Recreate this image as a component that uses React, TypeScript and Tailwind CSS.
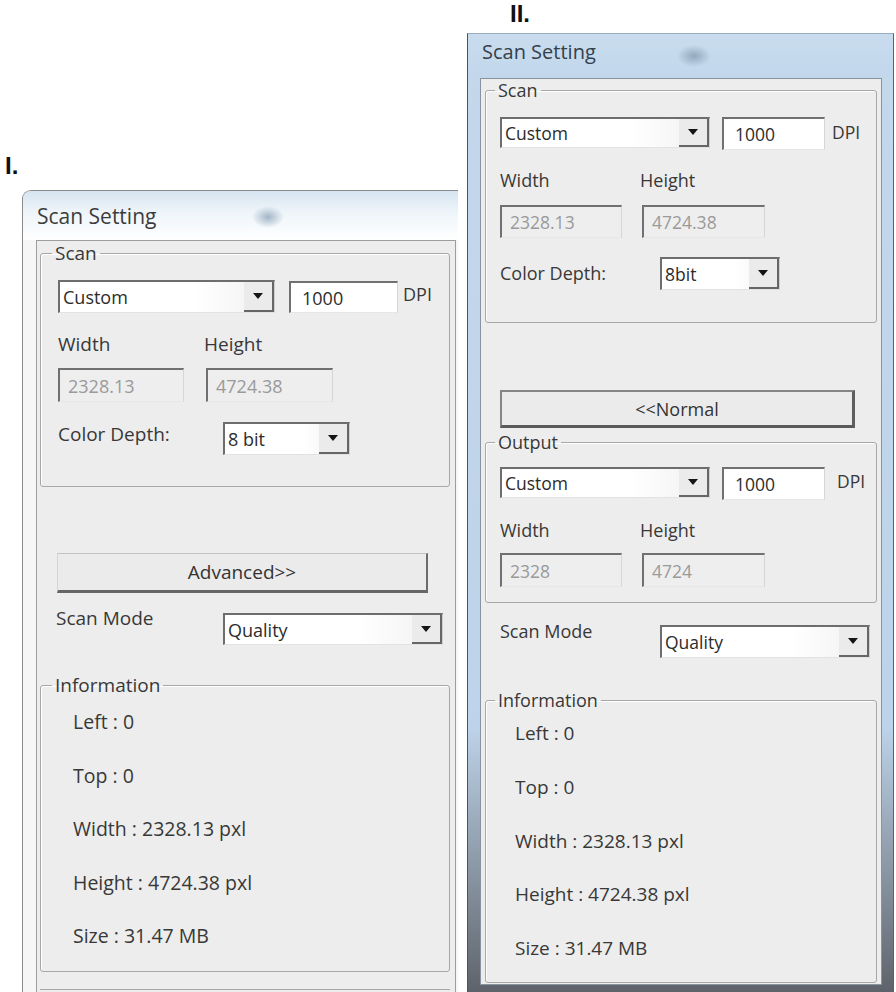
import type { ReactNode } from 'react';

type BoxProps = { value: string; className?: string };

const Arrow = () => (
  <svg width="10" height="6" viewBox="0 0 10 6">
    <path d="M0 0h10L5 6z" fill="#151515" />
  </svg>
);

function Combo({ value, className = '' }: BoxProps) {
  return (
    <div className={`flex shrink-0 border-l-2 border-t-2 border-[#6d6d6d] border-r border-b border-r-[#cfcfcf] border-b-[#e2e2e2] bg-[linear-gradient(to_right,#ffffff_62%,#f0f0f0)] text-[#2c2c2c] ${className}`}>
      <span className="flex flex-1 items-center pl-[3px]">{value}</span>
      <span className="flex w-[30px] items-center justify-center border-r-2 border-b-2 border-[#666666] bg-[#ebebeb]">
        <Arrow />
      </span>
    </div>
  );
}

function TextBox({ value, className = '', disabled = false }: BoxProps & { disabled?: boolean }) {
  return (
    <div
      className={`flex shrink-0 items-center border-l-2 border-t-2 border-[#707070] border-r border-b border-r-[#d6d6d6] border-b-[#e6e6e6] ${
        disabled ? 'bg-[#eeeeee] pl-[8px] text-[#9a9a9a]' : 'bg-white pl-[11px] text-[#2c2c2c]'
      } ${className}`}
    >
      {value}
    </div>
  );
}

function GroupBox({ title, className = '', legend = '', children }: { title: string; className?: string; legend?: string; children: ReactNode }) {
  return (
    <fieldset className={`shrink-0 rounded-[3px] border border-[#a7a7a7] shadow-[inset_1px_1px_0_#ffffff] ${className}`}>
      <legend className={`px-[3px] leading-[20px] ${legend}`}>{title}</legend>
      {children}
    </fieldset>
  );
}

const infoLines = ['Left : 0', 'Top : 0', 'Width : 2328.13 pxl', 'Height : 4724.38 pxl', 'Size : 31.47 MB'];

function LeftWindow() {
  return (
    <div className="mt-[12px] ml-[22px] w-[470px] rounded-tl-[9px] border-l border-t border-[#8b8b8b] bg-[#f6f6f6] pb-[12px]">
      <div className="h-[49px] rounded-tl-[8px] bg-[radial-gradient(16px_11px_at_245px_26px,#a3b6c8,transparent),linear-gradient(to_bottom,#d5e4f0,#edf4f9_40%,#ffffff)] pt-[11px] pl-[14px] text-[21px] leading-[28px] text-[#3c3c3c]">
        Scan Setting
      </div>
      <div className="ml-[13px] flex w-[420px] flex-col items-start border border-[#9d9d9d] bg-[#ededed] text-[19px] leading-[22px] text-[#383838]">
        <GroupBox title="Scan" className="mt-[2px] ml-[3px] w-[410px] pb-[31px]" legend="ml-[11px]">
          <div className="pt-[17px] pl-[17px]">
            <div className="flex items-start text-[18px]">
              <Combo value="Custom" className="h-[33px] w-[217px]" />
              <TextBox value="1000" className="mt-[1px] ml-[14px] h-[32px] w-[109px]" />
              <span className="mt-[3px] ml-[5px]">DPI</span>
            </div>
            <div className="mt-[20px] flex">
              <span className="w-[146px]">Width</span>
              <span>Height</span>
            </div>
            <div className="mt-[13px] flex gap-[22px] text-[18px]">
              <TextBox disabled value="2328.13" className="h-[34px] w-[126px]" />
              <TextBox disabled value="4724.38" className="h-[34px] w-[127px]" />
            </div>
            <div className="mt-[20px] flex items-start">
              <span className="mt-[1px] w-[165px]">Color Depth:</span>
              <Combo value="8 bit" className="h-[33px] w-[127px] text-[18px]" />
            </div>
          </div>
        </GroupBox>

        <button className="mt-[66px] ml-[20px] h-[40px] w-[371px] shrink-0 border-t border-l border-r-2 border-b-[3px] border-t-[#c4c4c4] border-l-[#d4d4d4] border-r-[#6c6c6c] border-b-[#666666] bg-[#ebebeb] text-[19px] text-[#333333]">
          Advanced&gt;&gt;
        </button>

        <div className="mt-[14px] ml-[19px] flex items-start">
          <span className="w-[167px]">Scan Mode</span>
          <Combo value="Quality" className="mt-[6px] h-[32px] w-[220px] text-[18px]" />
        </div>

        <GroupBox title="Information" className="mt-[30px] ml-[3px] w-[410px] pb-[24px]" legend="ml-[11px]">
          <div className="pt-[16px] pl-[32px] text-[19.5px]">
            {infoLines.map((l, i) => (
              <div key={l} className={i < infoLines.length - 1 ? 'h-[53.5px]' : ''}>{l}</div>
            ))}
          </div>
        </GroupBox>
        <div className="mt-[17px] ml-[3px] h-[20px] w-[410px] border-t border-[#a7a7a7]" />
      </div>
    </div>
  );
}

function RightWindow() {
  return (
    <div className="mt-[7px] w-[427px] border-l border-t border-r border-l-[#4b545d] border-t-[#9aabbb] border-r-[#59636d] bg-[linear-gradient(to_bottom,#c4d8ec_0%,#bdd3e9_72%,#8d9aa8_86%,#5c6168_100%)] pb-[12px]">
      <div className="h-[44px] bg-[radial-gradient(17px_11px_at_226px_22px,#93a8bc,transparent),linear-gradient(to_bottom,#c9dcee,#c2d7ec)] pt-[5px] pl-[14px] text-[20px] leading-[26px] text-[#34404b]">
        Scan Setting
      </div>
      <div className="ml-[12px] flex w-[402px] flex-col items-start border border-[#8893a0] bg-[#ededed] pb-[1px] text-[18px] leading-[22px] text-[#383838]">
        <GroupBox title="Scan" className="mt-[1px] ml-[4px] w-[392px] pb-[32px]" legend="ml-[9px]">
          <div className="pt-[17px] pl-[14px]">
            <div className="flex items-start text-[17.5px]">
              <Combo value="Custom" className="h-[31px] w-[210px]" />
              <TextBox value="1000" className="ml-[12px] h-[33px] w-[103px]" />
              <span className="mt-[4px] ml-[7px]">DPI</span>
            </div>
            <div className="mt-[19px] flex">
              <span className="w-[140px]">Width</span>
              <span>Height</span>
            </div>
            <div className="mt-[14px] flex gap-[20px] text-[17.5px]">
              <TextBox disabled value="2328.13" className="h-[33px] w-[122px]" />
              <TextBox disabled value="4724.38" className="h-[33px] w-[123px]" />
            </div>
            <div className="mt-[19px] flex items-start">
              <span className="mt-[5px] w-[160px]">Color Depth:</span>
              <Combo value="8bit" className="h-[33px] w-[120px] text-[17.5px]" />
            </div>
          </div>
        </GroupBox>

        <button className="mt-[67px] ml-[19px] h-[38px] w-[355px] shrink-0 border-2 border-r-[3px] border-b-[3px] border-[#858585] border-r-[#5e5e5e] border-b-[#5a5a5a] bg-[#ebebeb] text-[18px] text-[#333333]">
          &lt;&lt;Normal
        </button>

        <GroupBox title="Output" className="mt-[4px] ml-[4px] w-[392px] pb-[15px]" legend="ml-[9px]">
          <div className="pt-[15px] pl-[14px]">
            <div className="flex items-start text-[17.5px]">
              <Combo value="Custom" className="h-[31px] w-[210px]" />
              <TextBox value="1000" className="ml-[12px] h-[33px] w-[103px]" />
              <span className="mt-[3px] ml-[12px]">DPI</span>
            </div>
            <div className="mt-[19px] flex">
              <span className="w-[140px]">Width</span>
              <span>Height</span>
            </div>
            <div className="mt-[12px] flex gap-[20px] text-[17.5px]">
              <TextBox disabled value="2328" className="h-[34px] w-[122px]" />
              <TextBox disabled value="4724" className="h-[34px] w-[123px]" />
            </div>
          </div>
        </GroupBox>

        <div className="mt-[17px] ml-[19px] flex items-start">
          <span className="w-[160px]">Scan Mode</span>
          <Combo value="Quality" className="mt-[5px] h-[33px] w-[210px] text-[17.5px]" />
        </div>

        <GroupBox title="Information" className="mt-[32px] ml-[4px] w-[392px] pb-[23px]" legend="ml-[9px]">
          <div className="pt-[12px] pl-[29px] text-[19px]">
            {infoLines.map((l, i) => (
              <div key={l} className={i < infoLines.length - 1 ? 'h-[53.75px]' : ''}>{l}</div>
            ))}
          </div>
        </GroupBox>
      </div>
    </div>
  );
}

export default function App() {
  return (
    <div className="flex h-[992px] w-[896px] overflow-hidden bg-white font-['Open_Sans','Noto_Sans',sans-serif]">
      <div className="w-[458px] shrink-0 overflow-hidden">
        <div className="h-[178px] pt-[154px] pl-[5px] font-['Liberation_Sans',Arial,sans-serif] text-[24px] leading-none font-bold text-[#111111]">
          I.
        </div>
        <LeftWindow />
      </div>
      <div className="w-[438px] shrink-0 overflow-hidden pl-[9px]">
        <div className="h-[26px] pt-[2px] pl-[43px] font-['Liberation_Sans',Arial,sans-serif] text-[24px] leading-none font-bold text-[#111111]">
          II.
        </div>
        <RightWindow />
      </div>
    </div>
  );
}
